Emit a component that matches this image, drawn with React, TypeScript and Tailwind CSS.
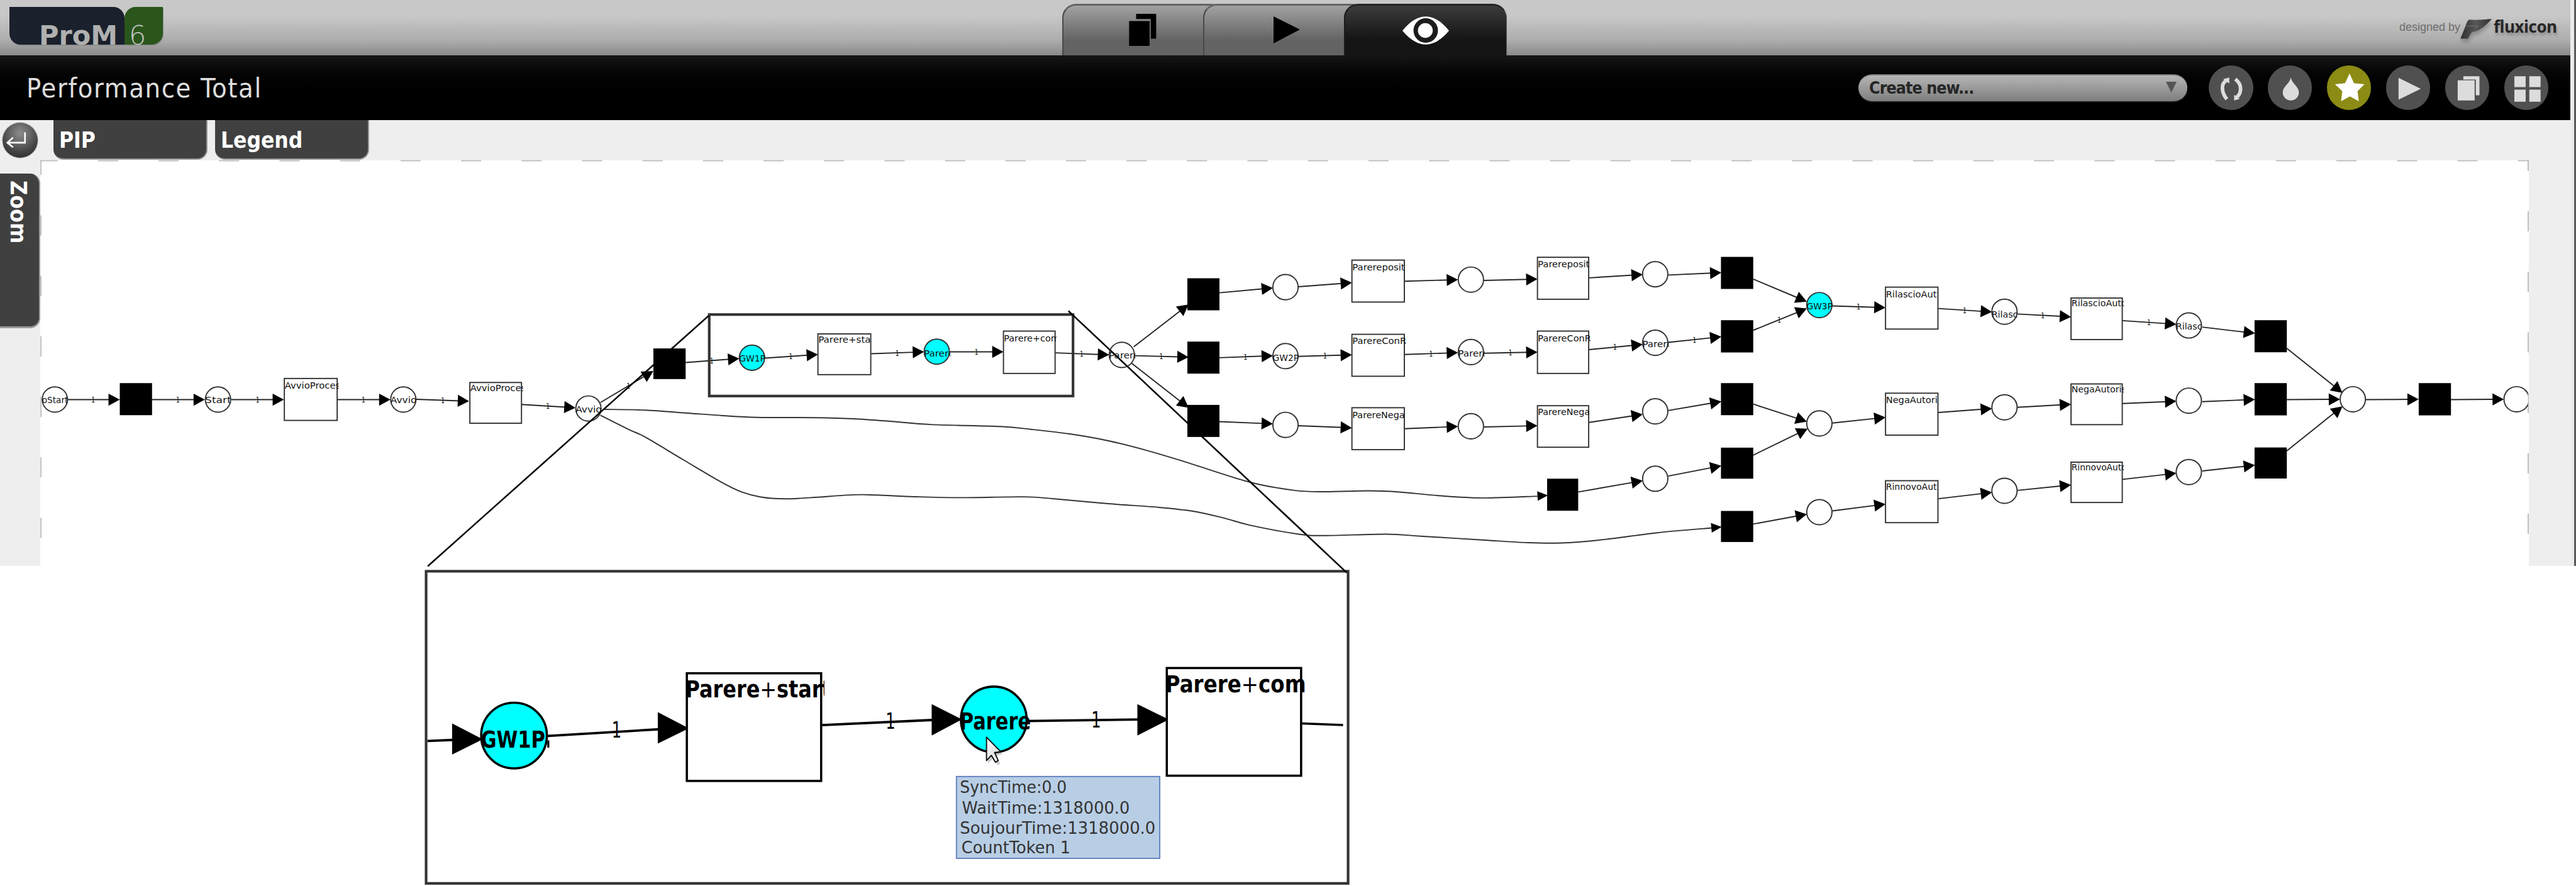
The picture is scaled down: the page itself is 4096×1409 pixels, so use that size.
import type { ReactNode } from "react";

/* Diagram data, in the net's own drawing units (6387 x 2197). */

type Place = { x: number; y: number; label?: string; dy?: number; hot?: boolean };

const places: Place[] = [
  { x: 136, y: 990.7, label: "oStart" },
  { x: 540.5, y: 990.7, label: "Start" },
  { x: 1000, y: 990.7, label: "Avvio" },
  { x: 1459, y: 1013, label: "Avvio", dy: 10 },
  { x: 1864.5, y: 887, label: "GW1P", hot: true, dy: 9 },
  { x: 2322.7, y: 872, label: "Parere", hot: true, dy: 12 },
  { x: 2781.4, y: 880, label: "Parere" },
  { x: 3187.3, y: 712 },
  { x: 3187.3, y: 883, label: "GW2P", dy: 12 },
  { x: 3187.3, y: 1053.6 },
  { x: 3647, y: 693.4 },
  { x: 3647, y: 873, label: "Parere", dy: 11 },
  { x: 3647, y: 1057 },
  { x: 4104, y: 680 },
  { x: 4104, y: 850, label: "Parere", dy: 10 },
  { x: 4104, y: 1020 },
  { x: 4104, y: 1187 },
  { x: 4511, y: 756.6, label: "GW3P", hot: true, dy: 11 },
  { x: 4511, y: 1050 },
  { x: 4511, y: 1270 },
  { x: 4970, y: 773, label: "Rilasc", dy: 15 },
  { x: 4970, y: 1010 },
  { x: 4970, y: 1217 },
  { x: 5427, y: 807, label: "Rilasc", dy: 10 },
  { x: 5427, y: 993.6 },
  { x: 5427, y: 1170.6 },
  { x: 5833.6, y: 990 },
  { x: 6239.7, y: 990 },
];

/* x, y, width, height */
const silent: number[][] = [
  [297, 950, 80, 79.5],
  [1620, 864, 80, 76],
  [2944, 690, 79.5, 79.5],
  [2944, 847, 79.5, 79.5],
  [2944, 1004, 79.5, 79.5],
  [4267, 637, 80, 79.5],
  [4267, 794, 80, 80],
  [4267, 950, 80, 79.5],
  [4267, 1110, 80, 77],
  [3836, 1187, 77, 79.5],
  [4267, 1267, 80, 77],
  [5590, 794, 80, 79.5],
  [5590, 950, 80, 80],
  [5590, 1109.6, 80, 77],
  [5997, 950, 80, 80],
];

type Box = [number, number, number, number, string, number, number];

/* x, y, width, height, label, label baseline, label length */
const boxes: Box[] = [
  [704, 937.5, 132, 105, "AvvioProces", 963.6, 138],
  [1164, 947.5, 129, 102, "AvvioProces", 969.5, 138],
  [2027, 827, 132, 102, "Parere+sta", 850, 130],
  [2487, 820, 129, 106, "Parere+com", 847, 138],
  [3351, 644, 131, 105, "Parereposit", 670, 130],
  [3351, 828, 131, 105, "ParereConR", 853.6, 134],
  [3351, 1010, 131, 105, "ParereNega", 1037, 130],
  [3811, 637, 128, 105, "Parereposit", 663, 128],
  [3811, 820, 128, 106, "ParereConR", 846, 132],
  [3811, 1005, 128, 104, "ParereNega", 1028.6, 129],
  [4674, 711, 131, 105, "RilascioAut", 738, 126],
  [4674, 974, 131, 105, "NegaAutori", 1000, 128],
  [4674, 1191, 131, 105, "RinnovoAut", 1214, 126],
  [5134, 738, 128, 104, "RilascioAuto", 760, 137],
  [5134, 951, 128, 102, "NegaAutoris", 973.5, 136],
  [5134, 1145, 128, 101, "RinnovoAuto", 1167, 137],
];

/* x1, y1, x2, y2, optional x of the arc weight */
const arcs: number[][] = [
  [168, 991, 297, 991, 231],
  [377, 991, 508, 991, 441],
  [573, 991, 704, 991, 638.6],
  [836, 991, 968, 991, 901],
  [1032, 990, 1163, 995, 1098],
  [1293, 1003, 1427, 1011, 1358.5],
  [1489, 998, 1620, 920, 1558],
  [1700, 899, 1833, 889, 1764.5],
  [1896, 888, 2028, 879, 1960.6],
  [2160, 877, 2291, 872.6, 2224.6],
  [2355, 872.5, 2488, 872.5, 2421],
  [2617, 875, 2750, 880, 2682],
  [2813, 882, 2947, 885.5, 2879],
  [2811, 860, 2947, 755],
  [2805, 900, 2947, 1011],
  [3023, 726, 3156, 714],
  [3219, 711, 3352, 701],
  [3483, 697.5, 3615, 693.4],
  [3679, 695.4, 3812, 692],
  [3940, 689, 4073, 680.6],
  [4136.6, 682, 4268, 676],
  [3023, 887, 3156, 882, 3088],
  [3219, 883.7, 3352, 880, 3285.5],
  [3483, 879, 3615, 874.5, 3548],
  [3679, 876, 3812, 873, 3745],
  [3940, 867, 4073, 854, 4004],
  [4136, 849, 4268, 835, 4201.6],
  [3023, 1045.4, 3156, 1051],
  [3219, 1055.6, 3352, 1061],
  [3483, 1063, 3615, 1057.6],
  [3679, 1058.7, 3812, 1055.6],
  [3940, 1047.5, 4073, 1027.5],
  [4136, 1018, 4268, 995.4],
  [3913, 1220, 4073, 1192],
  [4136, 1180.6, 4268, 1155],
  [4347, 692, 4480, 748],
  [4347, 819, 4480, 765, 4411.5],
  [4347, 1002, 4480, 1045.4],
  [4347, 1128.6, 4482, 1063],
  [4347, 1299.5, 4480, 1275],
  [4543, 758.7, 4675, 762.8, 4608],
  [4806, 765, 4939, 773.5, 4871],
  [5002, 778.6, 5135, 785.7, 5065],
  [4543, 1049, 4675, 1035],
  [4806, 1023, 4939, 1013],
  [5002, 1010, 5135, 1002.5],
  [4543, 1267, 4675, 1250],
  [4806, 1236.7, 4939, 1221],
  [5002, 1216, 5135, 1202.5],
  [5262, 795, 5396, 804, 5328],
  [5460, 811, 5591, 826.6],
  [5262, 1000.6, 5396, 995],
  [5460, 996, 5591, 990.5],
  [5262, 1188.7, 5396, 1173.5],
  [5460, 1168, 5591, 1153.5],
  [5670, 864, 5808, 974],
  [5670, 991, 5802, 990],
  [5670, 1118, 5808, 1007.6],
  [5866, 991, 5997, 990],
  [6077, 991, 6208, 990],
];

const upperCurve: number[][] = [
  [1496, 1015], [1600, 1017], [1700, 1024], [1791, 1030.6], [1877, 1035], [2021, 1035.7],
  [2116.6, 1038.4], [2212, 1045], [2308, 1052.7], [2480, 1057.7], [2556.6, 1064.6],
  [2652, 1076], [2748, 1093], [2843.6, 1117], [2939, 1145.4], [3100, 1196], [3209.6, 1216],
  [3285, 1219.4], [3394, 1217], [3470, 1220], [3567, 1229], [3676, 1234.7], [3812, 1230.5],
];
const lowerCurve: number[][] = [
  [1488.6, 1029.7], [1561, 1066], [1600, 1084], [1695.7, 1141], [1791, 1197], [1839, 1220],
  [1887, 1232.7], [1944, 1237], [2011, 1234], [2116.6, 1227], [2174, 1227.6],
  [2269.6, 1231.7], [2384, 1234], [2537.5, 1232], [2614, 1236.8], [2748, 1249], [2872, 1258],
  [2958, 1267.6], [3035, 1284.6], [3100, 1302.5], [3220, 1324.5], [3285, 1328],
  [3437, 1324.5], [3524, 1329.6], [3676, 1339], [3784, 1345.5], [3871, 1346.4],
  [3979, 1337.7], [4109, 1321], [4245, 1309],
];

function smooth(p: number[][]) {
  let d = `M${p[0][0]} ${p[0][1]}`;
  for (let i = 0; i < p.length - 1; i++) {
    const a = p[i - 1] ?? p[i];
    const b = p[i];
    const c = p[i + 1];
    const e = p[i + 2] ?? c;
    d += `C${b[0] + (c[0] - a[0]) / 6} ${b[1] + (c[1] - a[1]) / 6} ${c[0] - (e[0] - b[0]) / 6} ${
      c[1] - (e[1] - b[1]) / 6
    } ${c[0]} ${c[1]}`;
  }
  return d;
}

function arrowHead(x1: number, y1: number, x2: number, y2: number, len: number, half: number) {
  const l = Math.hypot(x2 - x1, y2 - y1);
  const ux = (x2 - x1) / l;
  const uy = (y2 - y1) / l;
  const bx = x2 - ux * len;
  const by = y2 - uy * len;
  return `${x2},${y2} ${bx - uy * half},${by + ux * half} ${bx + uy * half},${by - ux * half}`;
}

function Arc({ a }: { a: number[] }) {
  const [x1, y1, x2, y2, at] = a;
  const l = Math.hypot(x2 - x1, y2 - y1);
  const ex = x2 - ((x2 - x1) / l) * 24;
  const ey = y2 - ((y2 - y1) / l) * 24;
  const my = at ? y1 + ((at - x1) / (x2 - x1)) * (y2 - y1) : 0;
  return (
    <g>
      <line x1={x1} y1={y1} x2={ex} y2={ey} stroke="#262626" strokeWidth="3" />
      <polygon points={arrowHead(x1, y1, x2, y2, 28, 15)} />
      {at ? (
        <text x={at} y={my + 7} textAnchor="middle" fontSize="20" textLength="9" lengthAdjust="spacingAndGlyphs">
          1
        </text>
      ) : null}
    </g>
  );
}

function Net() {
  return (
    <svg
      className="pointer-events-none absolute inset-0 h-[1409px] w-[4096px] font-['DejaVu_Sans',sans-serif]"
      viewBox="0 0 6387 2197"
      preserveAspectRatio="none"
    >
      <defs>
        <clipPath id="canvas">
          <rect x="103" y="397" width="6165" height="1007" />
        </clipPath>
        <clipPath id="frame">
          <rect x="100" y="397" width="6170" height="1007" />
        </clipPath>
        <linearGradient id="pointer" x1="0" y1="0" x2="1" y2="1">
          <stop offset="0" stopColor="#fff" />
          <stop offset="0.6" stopColor="#e4e4e4" />
          <stop offset="1" stopColor="#fff" />
        </linearGradient>
      </defs>

      <g stroke="#bdbdbd" strokeWidth="3" strokeDasharray="50 100" clipPath="url(#frame)">
        <line x1="93" y1="398.5" x2="6269" y2="398.5" />
        <line x1="101.5" y1="384" x2="101.5" y2="1404" />
        <line x1="6268.5" y1="374" x2="6268.5" y2="1404" />
      </g>

      <g clipPath="url(#canvas)">
        <path d={smooth(upperCurve)} fill="none" stroke="#333" strokeWidth="3" />
        <path d={smooth(lowerCurve)} fill="none" stroke="#333" strokeWidth="3" />
        <polygon points={arrowHead(3780, 1232, 3838, 1228.5, 26, 12)} />
        <polygon points={arrowHead(4200, 1313, 4269, 1306.5, 26, 12)} />
        {arcs.map((a, i) => (
          <Arc key={i} a={a} />
        ))}
        {silent.map(([x, y, w, h], i) => (
          <rect key={i} x={x} y={y} width={w} height={h} />
        ))}
        {boxes.map(([x, y, w, h, label, base, length], i) => (
          <g key={i}>
            <clipPath id={`box${i}`}>
              <rect x={x - 2} y={y - 2} width={w + 6} height={h} />
            </clipPath>
            <rect x={x + 1} y={y + 1} width={w - 1} height={h - 1} fill="#fff" stroke="#333" strokeWidth="3" />
            <text
              x={x + 2}
              y={base}
              fontSize="21"
              textLength={length}
              lengthAdjust="spacingAndGlyphs"
              clipPath={`url(#box${i})`}
              fill="#111"
            >
              {label}
            </text>
          </g>
        ))}
        {places.map((p, i) => (
          <g key={i}>
            <clipPath id={`place${i}`}>
              <rect x={p.x - 34} y={p.y - 34} width="68" height="68" />
            </clipPath>
            <circle cx={p.x} cy={p.y} r="31.3" fill={p.hot ? "#00ffff" : "#fff"} stroke="#333" strokeWidth="3" />
            {p.label ? (
              <text
                x={p.x - 32}
                y={p.y + (p.dy ?? 9)}
                fontSize="21"
                textLength={p.label === "Parere" ? 75 : 65}
                lengthAdjust="spacingAndGlyphs"
                clipPath={`url(#place${i})`}
                fill="#111"
              >
                {p.label}
              </text>
            ) : null}
          </g>
        ))}
      </g>

      <g fill="none" stroke="#333" strokeWidth="6.5">
        <rect x="1758.5" y="780" width="902" height="202" />
        <rect x="1056.5" y="1416.5" width="2286" height="774" />
      </g>
      <g stroke="#000" strokeWidth="4">
        <line x1="1757" y1="783" x2="1060.5" y2="1404" />
        <line x1="2649" y1="771" x2="3339" y2="1420" />
      </g>

      <g>
        <line x1="1060" y1="1837.5" x2="1130" y2="1834.5" stroke="#000" strokeWidth="6" />
        <polygon points="1197,1833 1121,1794 1121,1871" />
        <line x1="1358" y1="1825" x2="1640" y2="1808" stroke="#000" strokeWidth="6" />
        <polygon points="1708,1806 1631,1766 1631,1844" />
        <line x1="2038" y1="1798" x2="2320" y2="1785" stroke="#000" strokeWidth="6" />
        <polygon points="2385,1784 2310,1746 2310,1824" />
        <line x1="2548" y1="1788" x2="2830" y2="1784" stroke="#000" strokeWidth="6" />
        <polygon points="2898,1784 2820,1746 2820,1824" />
        <line x1="3228" y1="1794" x2="3330" y2="1798" stroke="#000" strokeWidth="5.5" />
        <g fontSize="56" textAnchor="middle">
          <text x="1529" y="1829.5" textLength="24" lengthAdjust="spacingAndGlyphs">1</text>
          <text x="2208" y="1806.5" textLength="24" lengthAdjust="spacingAndGlyphs">1</text>
          <text x="2718" y="1803.5" textLength="24" lengthAdjust="spacingAndGlyphs">1</text>
        </g>
        <g stroke="#000" strokeWidth="5.5">
          <circle cx="1274.5" cy="1824" r="81.5" fill="#00ffff" />
          <circle cx="2464" cy="1784" r="81.5" fill="#00ffff" />
          <rect x="1703" y="1669.5" width="333" height="267" fill="#fff" />
          <rect x="2893" y="1656.5" width="333" height="267" fill="#fff" />
        </g>
        <g fontSize="58" fontWeight="700">
          <text x="1192" y="1853.6" textLength="160" lengthAdjust="spacingAndGlyphs">GW1P</text>
          <rect x="1357" y="1836" width="5" height="18" />
          <clipPath id="firstBox">
            <rect x="1690" y="1650" width="354" height="120" />
          </clipPath>
          <text x="1699" y="1730" textLength="362" lengthAdjust="spacingAndGlyphs" clipPath="url(#firstBox)">
            Parere<tspan fontWeight="400">+</tspan>start
          </text>
          <text x="2379" y="1809" textLength="177" lengthAdjust="spacingAndGlyphs">Parere</text>
          <text x="2889" y="1716.6" textLength="349" lengthAdjust="spacingAndGlyphs">
            Parere<tspan fontWeight="400">+</tspan>com
          </text>
        </g>
        <path
          d="M2446 1828V1887L2457 1876L2470 1892L2476 1888L2467 1868L2481 1864Z"
          fill="#000"
          opacity="0.2"
          transform="translate(4 6)"
        />
        <path
          d="M2446 1828V1886L2458 1873L2468 1890L2475 1886L2466 1866L2481 1864Z"
          fill="url(#pointer)"
          stroke="#111"
          strokeWidth="3"
          strokeLinejoin="round"
        />
      </g>

      <g>
        <rect x="2371.5" y="1925.5" width="504" height="203" fill="#b8cee5" stroke="#6382bf" strokeWidth="3" />
        <g fontSize="41.5" fill="#333">
          <text x="2380" y="1967" textLength="265" lengthAdjust="spacingAndGlyphs">SyncTime:0.0</text>
          <text x="2385" y="2017" textLength="416" lengthAdjust="spacingAndGlyphs">WaitTime:1318000.0</text>
          <text x="2380" y="2067" textLength="485" lengthAdjust="spacingAndGlyphs">SoujourTime:1318000.0</text>
          <text x="2384" y="2116" textLength="270" lengthAdjust="spacingAndGlyphs">CountToken 1</text>
        </g>
      </g>
    </svg>
  );
}

function Logo() {
  return (
    <div className="mt-[11px] ml-[15px] flex h-[61px]">
      <div className="h-[60px] w-[183px] rounded-tr-[18px] rounded-bl-[18px] bg-[#1a212c] pt-[24px] pl-[47px] font-['DejaVu_Sans',sans-serif] text-[43px] leading-none font-bold text-[#b0b0b0] shadow-[1px_2px_0_#8f8f8f]">
        ProM
      </div>
      <div className="h-[60px] w-[61px] rounded-tl-[18px] rounded-br-[18px] bg-[#2a561b] pt-[24px] pl-[7px] font-['DejaVu_Sans',sans-serif] text-[43px] leading-none font-extralight text-[#c4c4c4] shadow-[1px_2px_0_#8f8f8f]">
        6
      </div>
    </div>
  );
}

function ViewTab({ children, active = false, last = false }: { children: ReactNode; active?: boolean; last?: boolean }) {
  return (
    <div
      className={
        (active
          ? "border-t-[#242424] border-l-[#1c1c1c] border-r-[#5a5a5a] bg-gradient-to-b from-[#3c3c3c] to-[#141414] to-70% "
          : "border-t-[#646464] border-l-[#484848] border-r-[#646464] bg-gradient-to-b from-[#a2a2a2] to-[#636363] to-70% ") +
        (last ? "" : "-mr-[35px] ") +
        "flex h-[82px] w-[259px] items-start border-t-[3px] border-r-[1.5px] border-l-[2px] rounded-t-[22px]"
      }
    >
      {children}
    </div>
  );
}

function TopBar() {
  return (
    <div className="flex h-[88px] justify-between bg-gradient-to-b from-[#c8c8c8] from-28% via-[#adadad] via-73% to-[#8a8a8a]">
      <div className="w-[1689px]">
        <Logo />
      </div>
      <div className="mt-[6px] flex flex-1">
        <ViewTab>
          <svg className="mt-[13px] ml-[104px] h-[51px] w-[44px]" viewBox="0 0 68 80">
            <path d="M17.5 0H67.5V62H54V13H17.5Z" />
            <rect x="51" y="15" width="3" height="48" fill="#666" />
            <rect x="0" y="18" width="51" height="62" />
          </svg>
        </ViewTab>
        <ViewTab>
          <svg className="mt-[17px] ml-[110px] h-[43px] w-[42px]" viewBox="0 0 42 43">
            <path d="M0 0L42 21L0 43Z" />
          </svg>
        </ViewTab>
        <ViewTab active last>
          <svg className="mt-[17px] ml-[91px] h-[45px] w-[74px]" viewBox="0 0 116 70">
            <path d="M0 35.5C20 10 40 0 58 0S96 10 116 35.5C96 60 76 70 58 70S20 60 0 35.5Z" fill="#fff" />
            <circle cx="58" cy="35" r="30.5" fill="#1c1c1c" />
            <circle cx="57" cy="35" r="18.5" fill="#fff" />
          </svg>
        </ViewTab>
      </div>
      <div className="flex items-start pt-[28px] pr-[22px]">
        <div className="mt-[4px] w-[97px] font-['Liberation_Sans',sans-serif] text-[18px] leading-[22px] whitespace-nowrap text-[#6c6c6c]">
          designed by
        </div>
        <svg className="mt-[2px] h-[34px] w-[51px] drop-shadow-[1px_5px_3px_rgba(0,0,0,0.25)]" viewBox="0 0 80 54">
          <defs>
            <linearGradient id="flux" x1="0" x2="1">
              <stop offset="0" stopColor="#2e2e2e" />
              <stop offset="0.5" stopColor="#585858" />
              <stop offset="1" stopColor="#2e2e2e" />
            </linearGradient>
          </defs>
          <path d="M22 2Q40 4 79 0Q68 14 50 26Q42 32 29 33Q24 40 19 50H0L13 18Q17 4 22 2Z" fill="url(#flux)" />
          <path d="M15 19Q28 16 46 19" fill="none" stroke="#777" strokeWidth="1.5" />
        </svg>
        <div className="ml-[2px] w-[100px] font-['Open_Sans',sans-serif] text-[26px] leading-[29px] font-bold tracking-[-0.5px] whitespace-nowrap text-[#262626] [text-shadow:1px_4px_4px_rgba(0,0,0,0.25)]">
          fluxicon
        </div>
      </div>
    </div>
  );
}

function RoundButton({ children, starred = false }: { children: ReactNode; starred?: boolean }) {
  return (
    <div className={(starred ? "bg-[#8c8b14] text-white " : "bg-[#505050] text-[#dcdcdc] ") + "size-[70.5px] rounded-full"}>
      <svg className="size-full" viewBox="0 0 110 110" fill="currentColor">
        {children}
      </svg>
    </div>
  );
}

function TitleBar() {
  return (
    <div className="flex h-[102.5px] items-center bg-gradient-to-b from-[#161616] to-black to-65% pr-[35px] pl-[42px]">
      <div className="mt-[3px] flex-1 font-['DejaVu_Sans_Condensed','DejaVu_Sans',sans-serif] text-[43px] leading-none tracking-[1.65px] text-[#dedede]">
        Performance Total
      </div>
      <div className="mr-[34px] flex h-[43px] w-[523px] items-center justify-between rounded-full border-t-2 border-[#7c7c7c] bg-gradient-to-b from-[#b6b6b6] to-[#7e7e7e] pr-[17px] pl-[17px] shadow-[0_2px_0_#191919]">
        <span className="font-['DejaVu_Sans_Condensed','DejaVu_Sans',sans-serif] text-[26.5px] leading-none font-bold tracking-[-0.9px] text-[#262626]">
          Create new...
        </span>
        <svg className="mb-[4px] h-[17px] w-[17px]" viewBox="0 0 17 17">
          <path d="M0 0H17L8.5 17Z" fill="#555" />
        </svg>
      </div>
      <div className="flex gap-[23.4px]">
        <RoundButton>
          <path d="M45 84Q34 70 34 56T45 37" fill="none" stroke="currentColor" strokeWidth="9" />
          <path d="M36 34L51 30V45Z" />
          <path d="M66 34Q79 44 79 58T69 79" fill="none" stroke="currentColor" strokeWidth="9" />
          <path d="M63 73V87L77 83Z" />
        </RoundButton>
        <RoundButton>
          <path d="M57 30C60 46 77 52 77 67A20 20 0 0 1 37 67C37 52 54 46 57 30Z" />
        </RoundButton>
        <RoundButton starred>
          <path d="M56 20L67 44L93 47L76 64L79 89L57 77L35 89L38 64L20 47L45 44Z" />
        </RoundButton>
        <RoundButton>
          <path d="M31 31L86 58L31 85Z" />
        </RoundButton>
        <RoundButton>
          <path d="M45 27H85V74H76V35H45Z" />
          <rect x="31" y="37" width="42" height="50" />
        </RoundButton>
        <RoundButton>
          <path d="M25 27H53V54H25ZM62 27H90V54H62ZM25 60H53V90H25ZM62 60H90V90H62Z" />
        </RoundButton>
      </div>
    </div>
  );
}

function DrawerTab({ label }: { label: string }) {
  return (
    <div className="h-[63.5px] w-[245px] rounded-b-[16px] border-r-2 border-b-2 border-[#9a9a9a] bg-[#404040] pt-[15px] pl-[9px] font-['DejaVu_Sans_Condensed','DejaVu_Sans',sans-serif] text-[35px] leading-none font-bold text-white">
      {label}
    </div>
  );
}

function Workspace() {
  return (
    <div className="flex min-h-0 flex-1 flex-col bg-[#eeeeee]">
      <div className="flex h-[64px] shrink-0">
        <div className="mt-[4px] ml-[4px] size-[56px] rounded-full bg-[radial-gradient(circle_at_50%_30%,#8c8c8c_0%,#6a6a6a_30%,#444_62%,#222_100%)] shadow-[0_0_2px_#888]">
          <svg className="size-full" viewBox="0 0 87 87" fill="none" stroke="#fff" strokeWidth="4">
            <path d="M55.5 24V49.5H12M26 37L12 49.5L26 61" />
          </svg>
        </div>
        <div className="ml-[25px] flex gap-[12px]">
          <DrawerTab label="PIP" />
          <DrawerTab label="Legend" />
        </div>
      </div>
      <div className="flex min-h-0 flex-1">
        <div className="w-[64px]">
          <div className="mt-[21px] h-[246px] w-[64px] rounded-r-[16px] border-r-2 border-b-[3px] border-[#9a9a9a] bg-[#404040] pt-[11px] pl-[11px] font-['DejaVu_Sans_Condensed','DejaVu_Sans',sans-serif] text-[35.5px] leading-none font-bold text-white [writing-mode:vertical-rl]">
            <div className="mr-[15px]">Zoom</div>
          </div>
        </div>
        <div className="mr-[66px] flex-1 bg-white" />
      </div>
    </div>
  );
}

export default function App() {
  return (
    <div className="relative h-[1409px] w-[4096px] overflow-hidden bg-white">
      <div className="flex h-[900px]">
        <div className="flex flex-1 flex-col">
          <TopBar />
          <TitleBar />
          <Workspace />
        </div>
        <div className="w-[6px] bg-[#ebebe9]" />
        <div className="w-[3px] bg-[#5a5a5a]" />
      </div>
      <Net />
    </div>
  );
}
